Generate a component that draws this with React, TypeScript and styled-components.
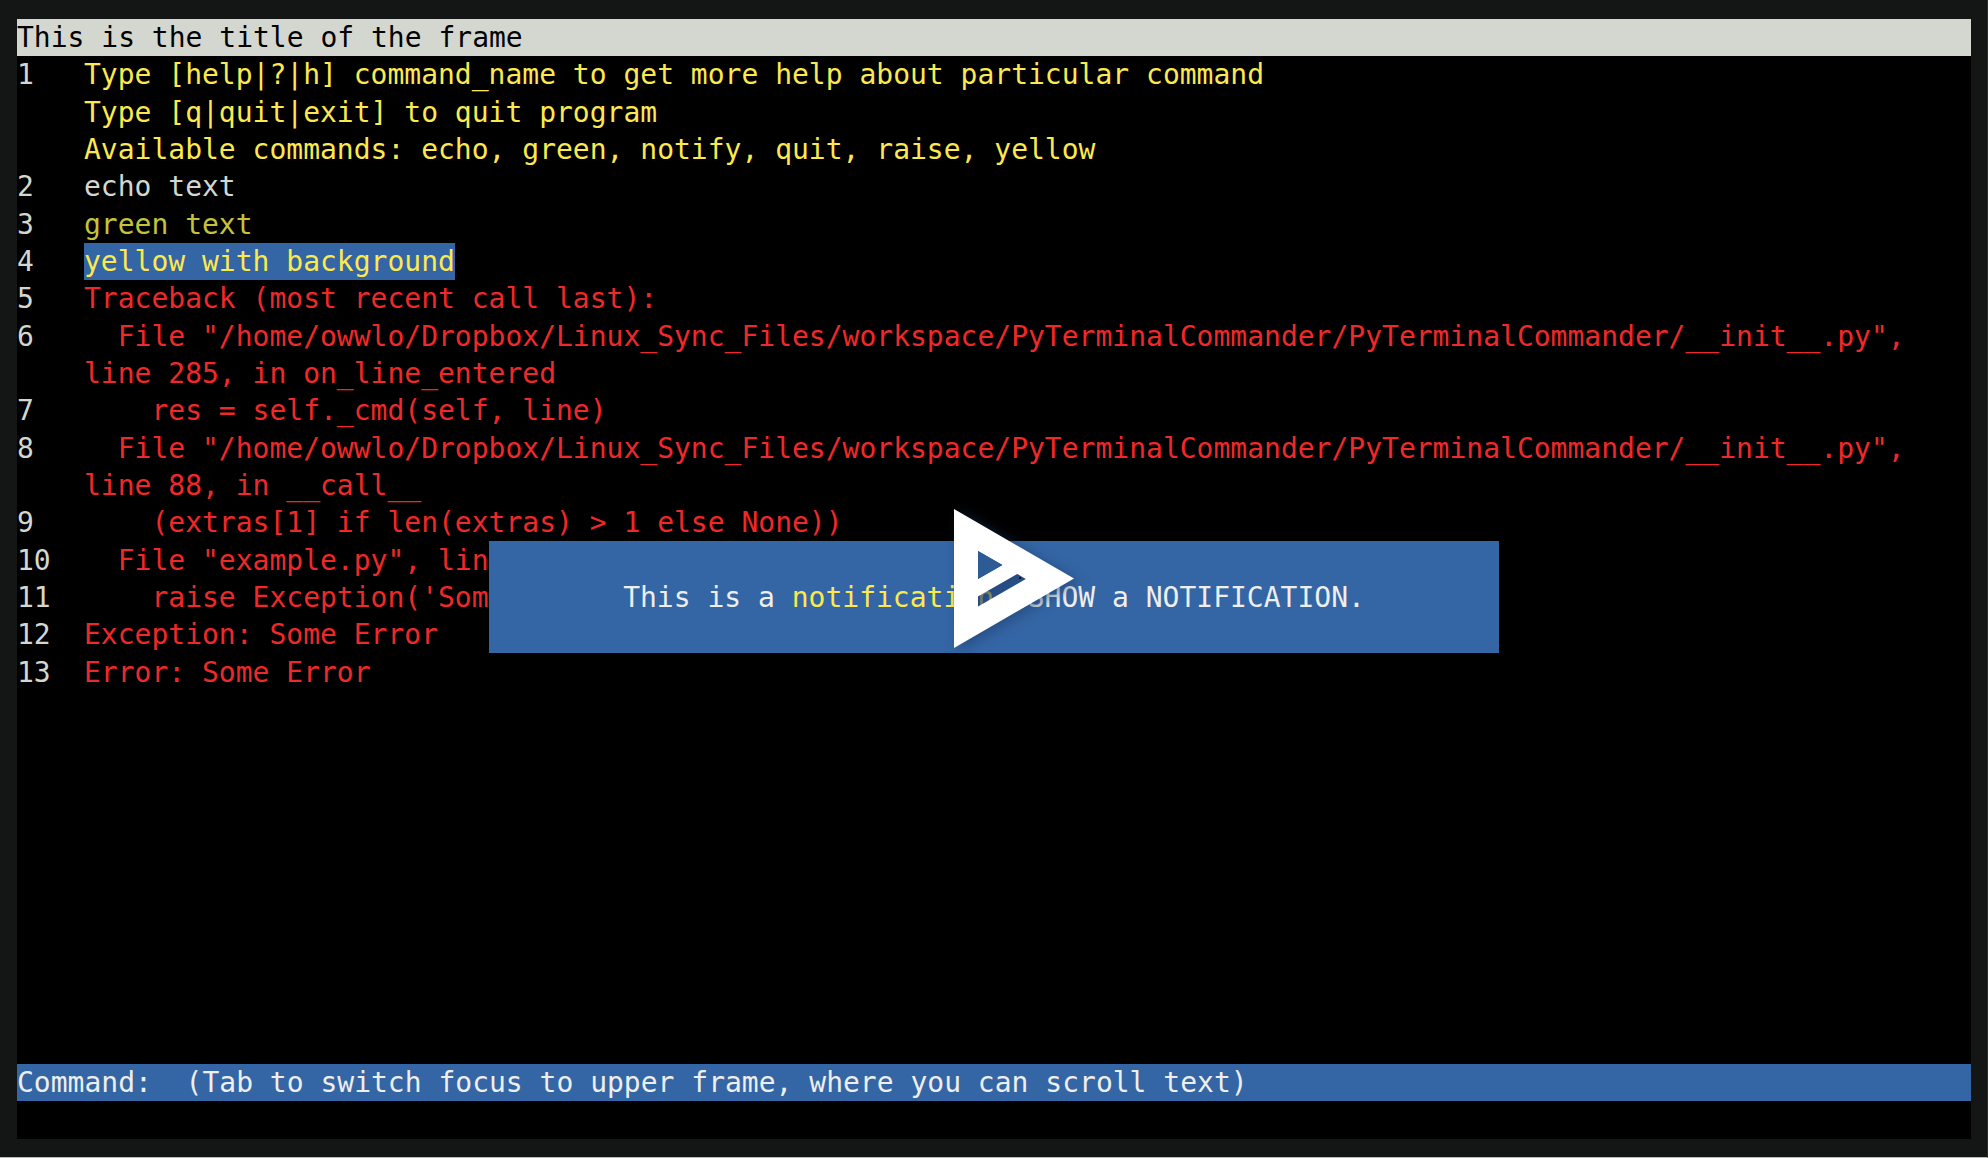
import React from "react";
import styled, { createGlobalStyle } from "styled-components";

const Global = createGlobalStyle`
  html, body { margin: 0; padding: 0; background: #141615; }
  #root { width: 1988px; height: 1158px; overflow: hidden; }
`;

const Shell = styled.div`
  width: 1988px;
  height: 1158px;
  box-sizing: border-box;
  padding: 19px 17px 19px 17px;
  background: #141615;
  border-right: 1px solid #2a2c2b;
  border-bottom: 1px solid #b9bab9;
`;

const Terminal = styled.main`
  position: relative;
  width: 1954px;
  height: 1120px;
  background: #000;
  display: grid;
  grid-template-rows: repeat(30, 1fr);
  font-family: "DejaVu Sans Mono", monospace;
  font-size: 28px;
  white-space: pre;
  overflow: hidden;
`;

const Bar = styled.div<{ $bg: string; $fg: string }>`
  background: ${(p) => p.$bg};
  color: ${(p) => p.$fg};
  height: 37px;
  line-height: 37px;
  align-self: start;
`;

const Row = styled.div`
  display: flex;
  line-height: 37px;
  min-width: 0;
`;

const Num = styled.span`
  width: 67px;
  flex: none;
  color: #d3d7cf;
`;

const Txt = styled.span<{ $c: string; $hl?: boolean }>`
  color: ${(p) => p.$c};
  background: ${(p) => (p.$hl ? "#3465a4" : "transparent")};
`;

const Notification = styled.div`
  position: absolute;
  left: 472px;
  top: 522px;
  width: 1010px;
  height: 112px;
  background: #3465a4;
  color: #eeeeec;
  display: flex;
  align-items: center;
  justify-content: center;
  line-height: 37px;
  box-sizing: border-box;
`;

const Y = styled.span`
  color: #fce94f;
`;

const Logo = styled.svg`
  position: absolute;
  left: 937px;
  top: 490px;
  width: 120px;
  height: 139px;
  filter: drop-shadow(5px 3px 6px rgba(30, 60, 110, 0.55));
`;

const Y1 = "#fce94f";
const W = "#d3d7cf";
const G = "#c4c43c";
const R = "#ef2929";

const lines: { n?: string; t: string; c: string; hl?: boolean }[] = [
  { n: "1", t: "Type [help|?|h] command_name to get more help about particular command", c: Y1 },
  { t: "Type [q|quit|exit] to quit program", c: Y1 },
  { t: "Available commands: echo, green, notify, quit, raise, yellow", c: Y1 },
  { n: "2", t: "echo text", c: W },
  { n: "3", t: "green text", c: G },
  { n: "4", t: "yellow with background", c: Y1, hl: true },
  { n: "5", t: "Traceback (most recent call last):", c: R },
  { n: "6", t: '  File "/home/owwlo/Dropbox/Linux_Sync_Files/workspace/PyTerminalCommander/PyTerminalCommander/__init__.py",', c: R },
  { t: "line 285, in on_line_entered", c: R },
  { n: "7", t: "    res = self._cmd(self, line)", c: R },
  { n: "8", t: '  File "/home/owwlo/Dropbox/Linux_Sync_Files/workspace/PyTerminalCommander/PyTerminalCommander/__init__.py",', c: R },
  { t: "line 88, in __call__", c: R },
  { n: "9", t: "    (extras[1] if len(extras) > 1 else None))", c: R },
  { n: "10", t: '  File "example.py", lin', c: R },
  { n: "11", t: "    raise Exception('Som", c: R },
  { n: "12", t: "Exception: Some Error", c: R },
  { n: "13", t: "Error: Some Error", c: R },
];

export default function App() {
  return (
    <>
      <Global />
      <Shell>
        <Terminal>
          <Bar $bg="#d3d7cf" $fg="#000">This is the title of the frame</Bar>
          {lines.map((l, i) => (
            <Row key={i}>
              <Num>{l.n ?? ""}</Num>
              <Txt $c={l.c} $hl={l.hl}>{l.t}</Txt>
            </Row>
          ))}
          {Array.from({ length: 10 }).map((_, i) => (
            <Row key={`e${i}`} />
          ))}
          <Bar $bg="#3465a4" $fg="#eeeeec">Command:  (Tab to switch focus to upper frame, where you can scroll text)</Bar>
          <Row />
          <Notification>
            <span>This is a <Y>notification</Y>. SHOW a NOTIFICATION.</span>
          </Notification>
          <Logo viewBox="0 0 120 139" aria-hidden="true">
            <path
              fill="#fff"
              fillRule="evenodd"
              d="M0 0 L120 69.5 L0 139 Z M24 42 V70 L48.4 56 Z M24 87.5 V97.5 L71.7 70 L63.3 65 Z"
            />
            <path fill="#2c5b96" d="M24 42 V70 L48.4 56 Z" />
            <path fill="#1e3c6e" fillOpacity="0.3" d="M24 87.5 V97.5 L71.7 70 L63.3 65 Z" />
            <circle cx="66" cy="69" r="1" fill="#000" />
          </Logo>
        </Terminal>
      </Shell>
    </>
  );
}
